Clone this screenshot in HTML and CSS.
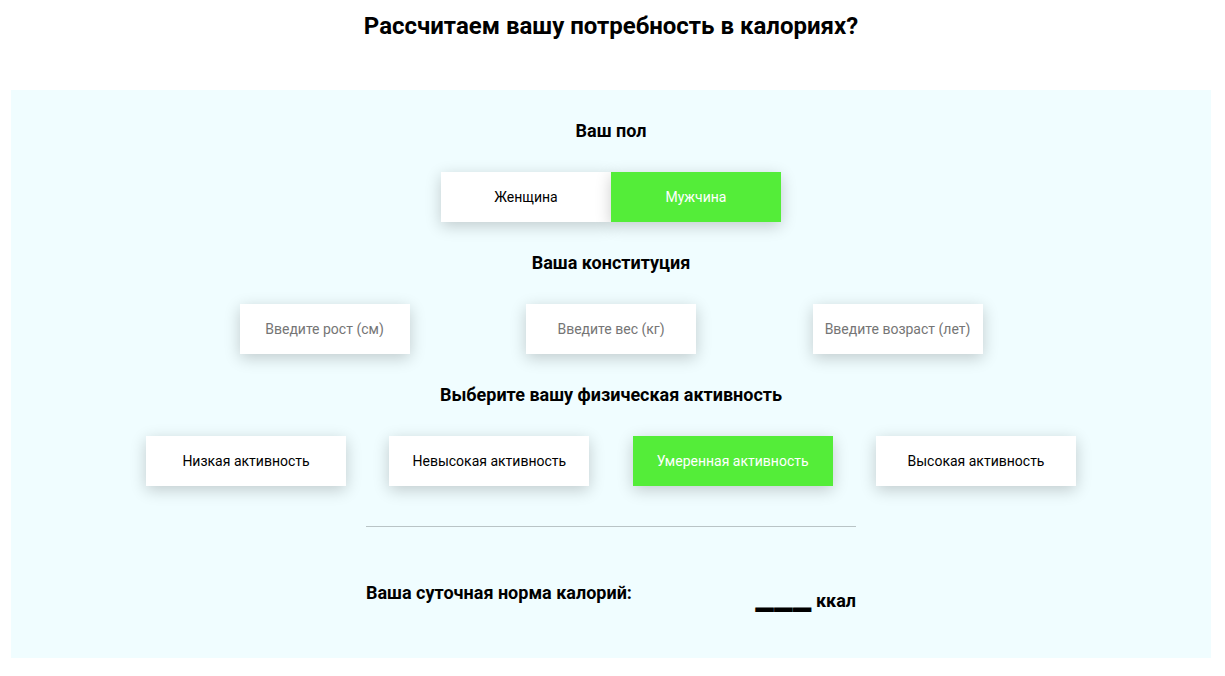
FILE: index.html
```html
<!DOCTYPE html>
<html lang="ru">
<head>
<meta charset="utf-8">
<title>Калькулятор калорий</title>
<link rel="stylesheet" href="styles.css">
</head>
<body>
<main class="page">
  <h1 class="page-title">Рассчитаем вашу потребность в калориях?</h1>
  <section class="calc">
    <h2 class="calc-title">Ваш пол</h2>
    <div class="gender">
      <button type="button" class="choice">Женщина</button>
      <button type="button" class="choice choice-active">Мужчина</button>
    </div>
    <h2 class="calc-title">Ваша конституция</h2>
    <div class="body-data">
      <input type="text" class="choice" placeholder="Введите рост (см)" aria-label="Рост">
      <input type="text" class="choice" placeholder="Введите вес (кг)" aria-label="Вес">
      <input type="text" class="choice" placeholder="Введите возраст (лет)" aria-label="Возраст">
    </div>
    <h2 class="calc-title">Выберите вашу физическая активность</h2>
    <div class="activity">
      <button type="button" class="choice choice-wide">Низкая активность</button>
      <button type="button" class="choice choice-wide">Невысокая активность</button>
      <button type="button" class="choice choice-wide choice-active">Умеренная активность</button>
      <button type="button" class="choice choice-wide">Высокая активность</button>
    </div>
    <div class="result">
      <h2 class="result-title">Ваша суточная норма калорий:</h2>
      <p class="result-value"><span class="result-number">___</span> ккал</p>
    </div>
  </section>
</main>
</body>
</html>
```
FILE: styles.css
```css
* {
  box-sizing: border-box;
}

body {
  margin: 0;
  background: #ffffff;
  color: #000000;
  font-family: Roboto, sans-serif;
}

.page {
  max-width: 1222px;
  padding: 12px 11px 18px;
}

.page-title {
  margin: 0 0 50px;
  font-size: 24px;
  line-height: 28px;
  font-weight: 700;
  text-align: center;
}

.calc {
  padding: 30px 40px 46px;
  background: #f0fdff;
}

.calc-title {
  margin: 0 0 30px;
  font-size: 18px;
  line-height: 22px;
  font-weight: 700;
  text-align: center;
}

.choice {
  width: 170px;
  height: 50px;
  padding: 0;
  border: 0;
  border-radius: 0;
  background: #ffffff;
  box-shadow: 0 4px 15px rgba(0, 0, 0, 0.2);
  color: #000000;
  font: 400 14px/16px Roboto, sans-serif;
  text-align: center;
}

.choice-wide {
  width: 200px;
}

.choice-active {
  background: #54ed39;
  color: #ffffff;
}

.choice::placeholder {
  color: #757575;
}

.gender,
.body-data,
.activity {
  display: flex;
  justify-content: center;
  margin-bottom: 30px;
}

.body-data {
  justify-content: space-evenly;
  max-width: 976px;
  margin: 0 auto 30px;
}

.activity {
  justify-content: space-between;
  max-width: 930px;
  margin: 0 auto 40px;
}

.result {
  display: flex;
  justify-content: space-between;
  max-width: 490px;
  margin: 0 auto;
  padding-top: 50px;
  border-top: 1px solid #b9c4c6;
}

.result-title {
  margin: 0;
  padding-top: 5px;
  font-size: 18px;
  line-height: 22px;
  font-weight: 700;
}

.result-value {
  margin: 0;
  font-size: 18px;
  line-height: 22px;
  font-weight: 700;
}

.result-number {
  font-size: 42px;
  line-height: 32px;
}
```
